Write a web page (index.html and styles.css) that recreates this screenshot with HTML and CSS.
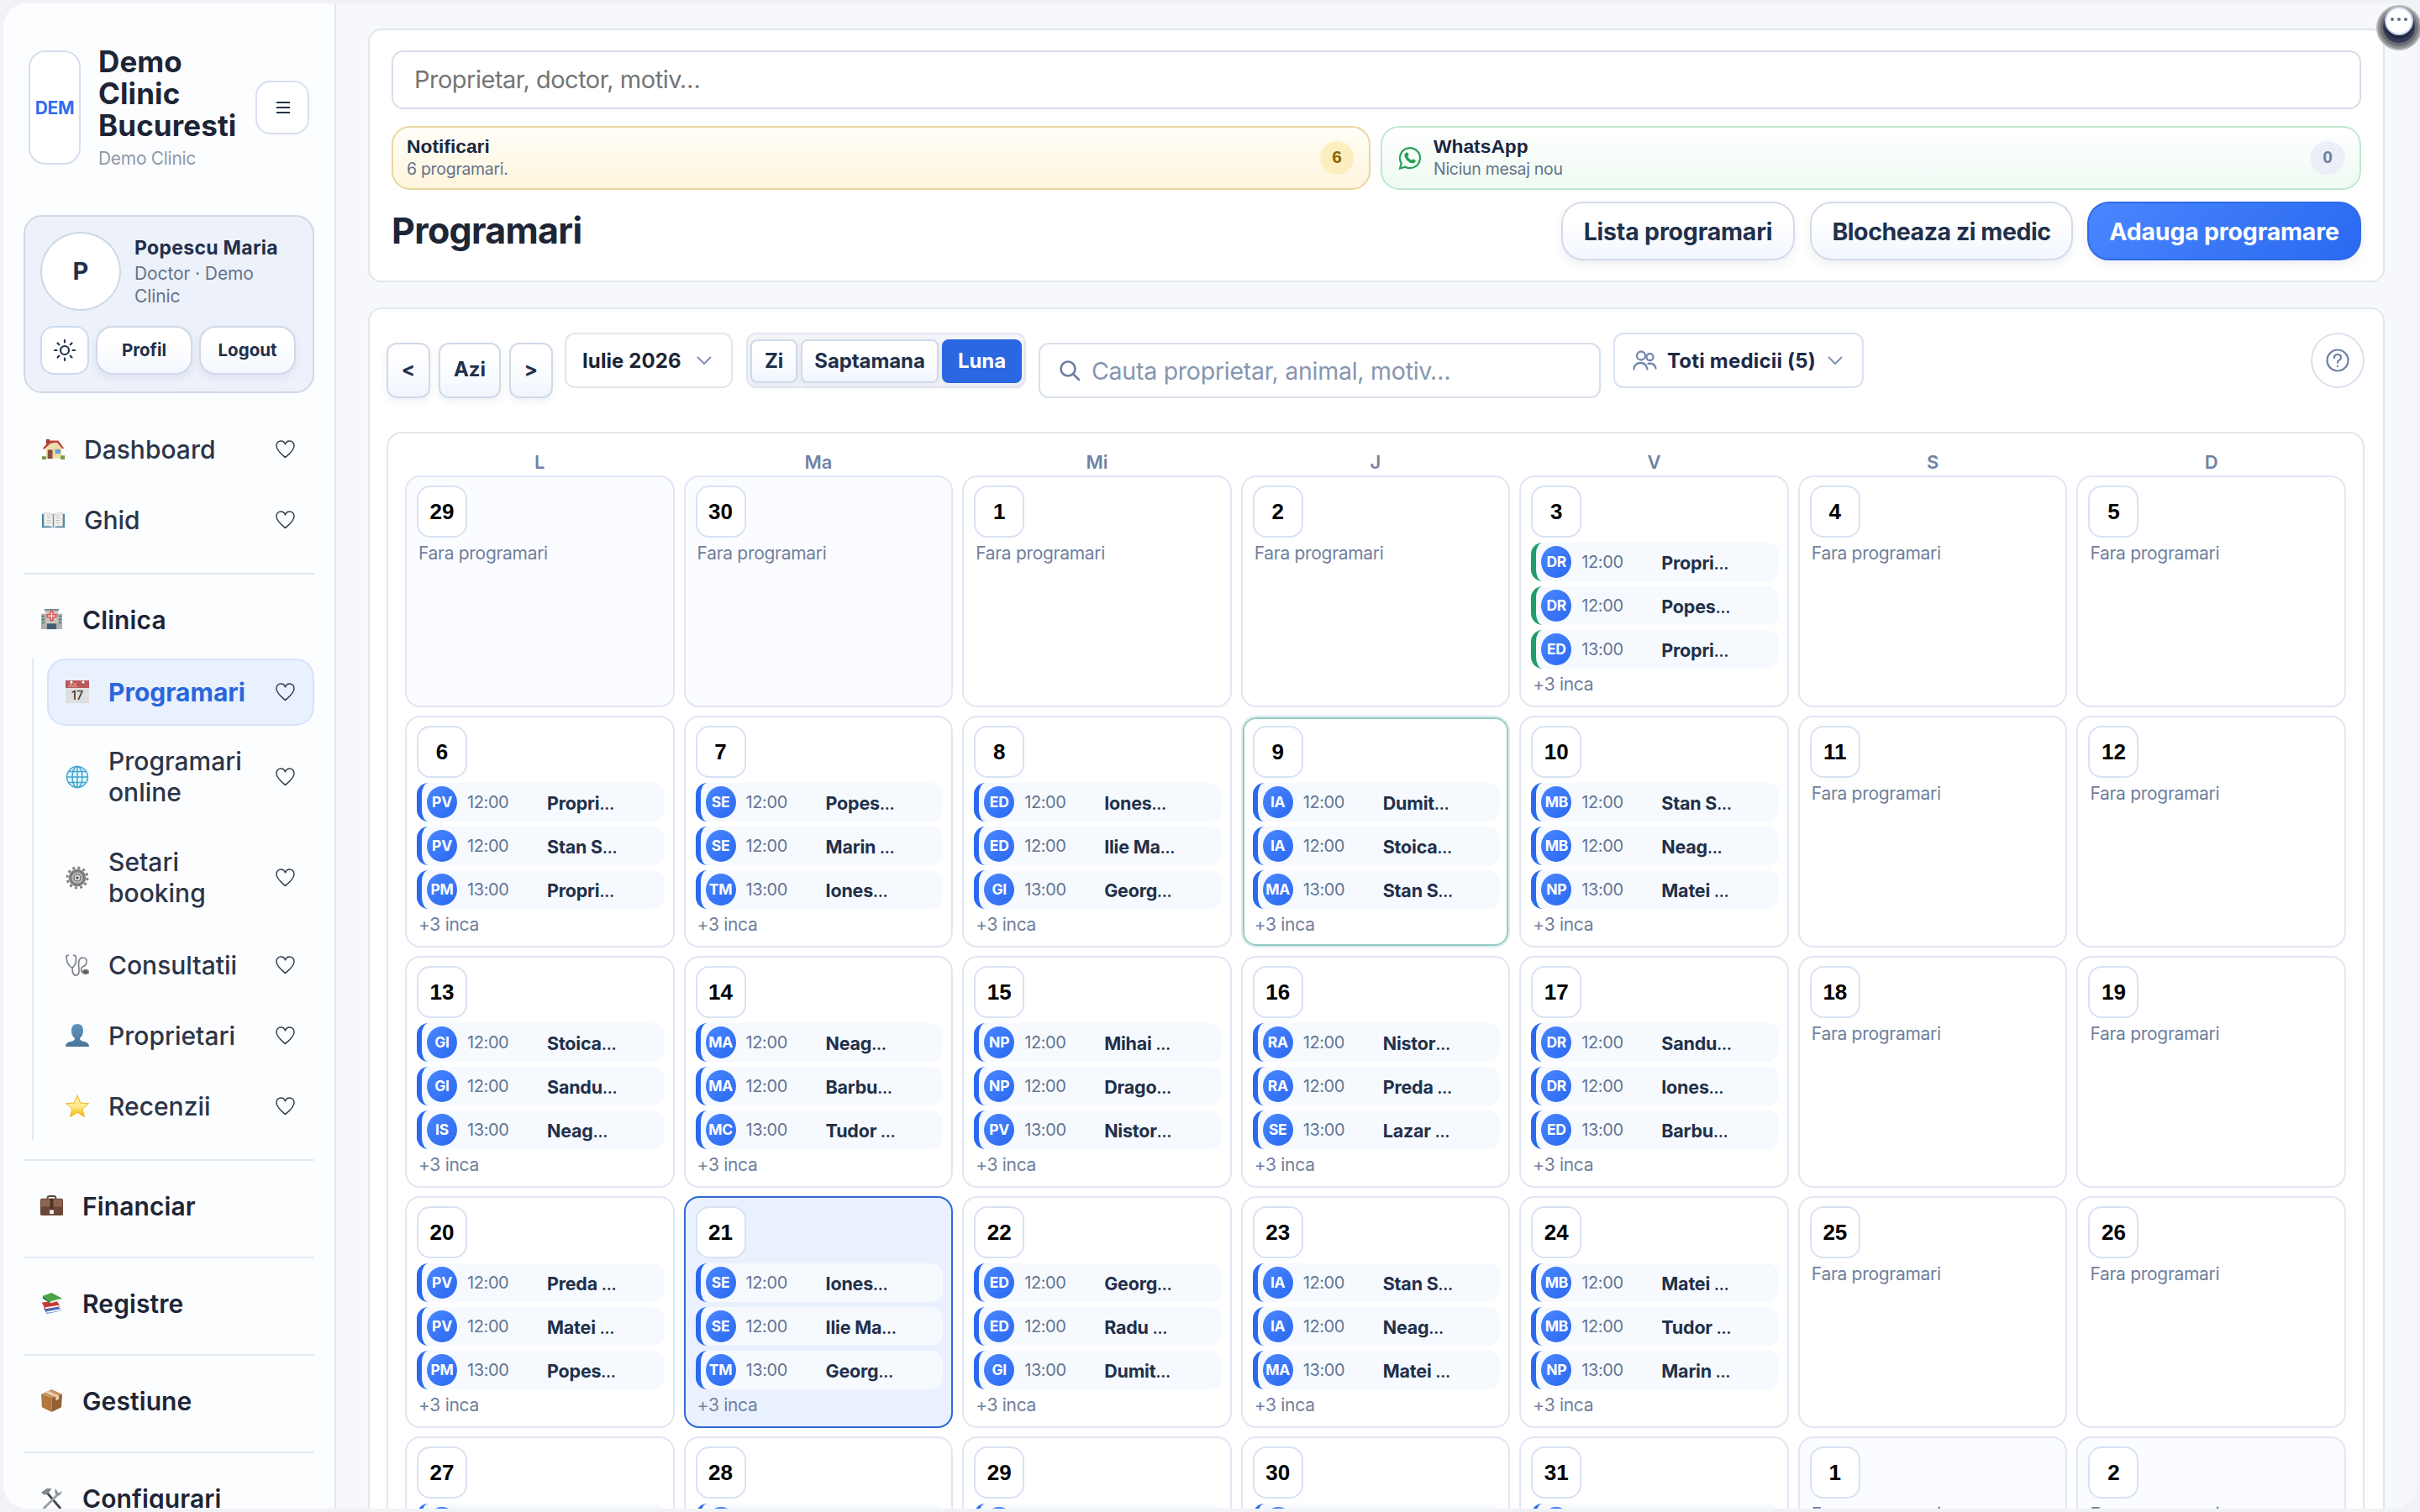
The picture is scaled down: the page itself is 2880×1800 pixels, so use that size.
FILE: index.html
```html
<!DOCTYPE html>
<html lang="ro">
	<head>
		<meta charset="utf-8" />
		<title>Programari</title>
		<link rel="stylesheet" href="styles.css">
	</head>
	<body>
		<!-- simboluri folosite de mai multe ori -->
		<svg class="defs">
			<symbol id="heart" viewBox="0 0 24 24"><path d="M12 22 C9 19 1 13.500 1 7.500 C1 4 3.500 1.500 6.500 1.500 C9.500 1.500 11.500 3.500 12 6 C12.500 3.500 14.500 1.500 17.500 1.500 C20.500 1.500 23 4 23 7.500 C23 13.500 15 19 12 22Z" fill="none" stroke="#2f3a4d" stroke-width="1.500"/></symbol>
			<symbol id="chevron" viewBox="0 0 18 10"><path d="M1 1 L9 9 L17 1" fill="none" stroke="#7d91b5" stroke-width="2"/></symbol>
		</svg>

		<div class="window">
			<aside class="sidebar">
				<div class="brand">
					<div class="brand-logo">DEM</div>
					<div class="brand-text">
						<div class="brand-name">Demo Clinic Bucuresti</div>
						<div class="brand-sub">Demo Clinic</div>
					</div>
					<div class="menu-btn"><span></span><span></span><span></span></div>
				</div>

				<div class="user">
					<div class="user-top">
						<div class="avatar">P</div>
						<div>
							<div class="user-name">Popescu Maria</div>
							<div class="user-role">Doctor · Demo Clinic</div>
						</div>
					</div>
					<div class="user-btns">
						<div class="theme-btn">
							<svg width="28" height="28" viewBox="0 0 28 28" fill="none" stroke="#25324a" stroke-width="2.200" stroke-linecap="round"><circle cx="14" cy="14" r="5"/><path d="M14 2v2.500M14 23.500v2.500M2 14h2.500M23.500 14h2.500M5.500 5.500l1.800 1.800M20.700 20.700l1.800 1.800M5.500 22.500l1.800-1.800M20.700 7.300l1.800-1.800"/></svg>
						</div>
						<div class="small-btn">Profil</div>
						<div class="small-btn">Logout</div>
					</div>
				</div>

				<nav class="nav">
					<a class="link">
						<svg class="ico" viewBox="0 0 28 28"><path d="M5 10 L11 5 H20 L24 11 V25 H5z" fill="#f0dcb0"/><path d="M5 1h4.500v6H5z" fill="#a63a2c"/><path d="M1 12 L10 2.500 H20 L27 12 L25.500 13 L18.500 5 H17 L10.500 6 L2.500 13.500Z" fill="#b8402f"/><path d="M7 14h6v11H7z" fill="#85513a"/><path d="M16 13h7v6h-7z" fill="#5aa4e0" stroke="#e8c890"/><path d="M0 22h5v4H0zM23 21h5v5h-5z" fill="#6f9b45"/></svg>
						<span class="label">Dashboard</span><svg class="heart"><use href="#heart"/></svg>
					</a>
					<a class="link">
						<svg class="ico" viewBox="0 0 28 28"><path d="M0 6h28v17H0z" fill="#4a86a8"/><path d="M2.500 5 Q9 4 14 7 Q19 4 25.500 5 V21 Q19 20 14 22.500 Q9 20 2.500 21Z" fill="#f1f1ef" stroke="#c9c9c9"/><path d="M14 7v15" stroke="#8b8b8b" stroke-width="1.500"/><path d="M6 8h5M6 11h5M6 14h5M6 17h5M17 8h5M17 11h5M17 14h5M17 17h5" stroke="#bdbdbd"/></svg>
						<span class="label">Ghid</span><svg class="heart"><use href="#heart"/></svg>
					</a>
				</nav>

				<div class="section open">
					<div class="section-head">
						<svg class="ico" viewBox="0 0 28 28"><path d="M6 2h16v24H6z" fill="#c9c5bd"/><path d="M1 7h6v19H1zM21 7h6v19h-6z" fill="#b3b0a8"/><path d="M5 1h18v2H5z" fill="#7f8790"/><path d="M2 9h3v2H2zM2 13h3v2H2zM2 17h3v2H2zM23 9h3v2h-3zM23 13h3v2h-3zM23 17h3v2h-3z" fill="#4b7a80"/><path d="M8 19h12v7H8z" fill="#3f5f78"/><path d="M12.500 4h3v4H19.500v3h-4V15h-3v-4h-4v-3h4z" fill="#f7dcdc" stroke="#e04848" stroke-width="1.500"/></svg>
						<span>Clinica</span>
					</div>
					<div class="subnav">
						<a class="link active">
							<svg class="ico" viewBox="0 0 28 28"><path d="M0 1h28v26H0z" fill="#dedede"/><path d="M0 0h28v9H0z" fill="#b85a5c"/><circle cx="7" cy="2" r="1.500" fill="#fff"/><circle cx="21" cy="2" r="1.500" fill="#fff"/><text x="3" y="8" font-size="6" fill="#eebcbc" font-family="Inter, sans-serif">JUL</text><text x="14" y="23" text-anchor="middle" font-size="14" fill="#333" font-family="Inter, sans-serif">17</text></svg>
							<span class="label">Programari</span><svg class="heart"><use href="#heart"/></svg>
						</a>
						<a class="link two">
							<svg class="ico" viewBox="0 0 28 28" fill="none" stroke="#42a5cf" stroke-width="1.500"><circle cx="14" cy="14" r="12.500" fill="#e3f6fc"/><ellipse cx="14" cy="14" rx="6" ry="12.500"/><path d="M14 1.500v25M1.500 14h25M3.500 7.500h21M3.500 20.500h21"/></svg>
							<span class="label">Programari online</span><svg class="heart"><use href="#heart"/></svg>
						</a>
						<a class="link two">
							<svg class="ico" viewBox="0 0 28 28"><circle cx="14" cy="14" r="12" fill="none" stroke="#858585" stroke-width="3" stroke-dasharray="3.100 3.180"/><circle cx="14" cy="14" r="8.500" fill="#b5b5b5" stroke="#7d7d7d" stroke-width="3.500"/><circle cx="14" cy="14" r="4" fill="#e2e2e2" stroke="#666"/><circle cx="14" cy="14" r="1.600" fill="#444"/></svg>
							<span class="label">Setari booking</span><svg class="heart"><use href="#heart"/></svg>
						</a>
						<a class="link">
							<svg class="ico" viewBox="0 0 28 28" fill="none" stroke="#7b7e83" stroke-width="1.600"><path d="M4 2 L1 3 Q1 12 6 16 Q8 18 10 15 Q14 10 12 3 L9 2"/><path d="M8 17 Q8 27 13 26 Q17 25 16 18 Q14 6 20 5 Q26 5 25 11 Q24 15 20 16 Q17 19 20 23"/><ellipse cx="24" cy="22" rx="3.500" ry="2.500" fill="#555" stroke="#888"/></svg>
							<span class="label">Consultatii</span><svg class="heart"><use href="#heart"/></svg>
						</a>
						<a class="link">
							<svg class="ico" viewBox="0 0 28 28"><defs><linearGradient id="bust" x2="0" y2="1"><stop stop-color="#5f93bb"/><stop offset="1" stop-color="#4a7498"/></linearGradient></defs><path d="M0 27 Q0 22 6 21 Q11 20 11 17 Q7 14 7 8 Q7 0 14 0 Q21 0 21 8 Q21 14 17 17 Q17 20 22 21 Q28 22 28 27Z" fill="url(#bust)"/></svg>
							<span class="label">Proprietari</span><svg class="heart"><use href="#heart"/></svg>
						</a>
						<a class="link">
							<svg class="ico" viewBox="0 0 28 28"><defs><linearGradient id="gold" x2="0" y2="1"><stop stop-color="#ffe98a"/><stop offset=".5" stop-color="#ffeb90"/><stop offset="1" stop-color="#f7b500"/></linearGradient></defs><path d="M14 1 L17.800 10 L27.500 10.700 L20 17 L22.500 26.500 L14 21.300 L5.500 26.500 L8 17 L.5 10.700 L10.200 10Z" fill="url(#gold)" stroke="#eeb32b"/></svg>
							<span class="label">Recenzii</span><svg class="heart"><use href="#heart"/></svg>
						</a>
					</div>
				</div>

				<div class="section">
					<div class="section-head">
						<svg class="ico" viewBox="0 0 28 28"><path d="M9 6 V4 Q9 2 11 2 H17 Q19 2 19 4 V6" fill="none" stroke="#5c463b" stroke-width="2"/><rect y="5" width="28" height="21" rx="2" fill="#6b4738"/><path d="M1 6h26v9H1z" fill="#8e6450"/><path d="M12 5h4v15h-4z" fill="#4d3228"/><path d="M11.500 19h5v5h-5z" fill="#eee"/></svg>
						<span>Financiar</span>
					</div>
				</div>
				<div class="section">
					<div class="section-head">
						<svg class="ico" viewBox="0 0 28 28"><path d="M4 20 L22 17 L26 23 L8 27Z" fill="#3d6fc0"/><path d="M8 24 L25 21 V23 L8 26Z" fill="#fff"/><path d="M2 13 L20 11 L25 18 L6 22Z" fill="#c33b34"/><path d="M6 19 L25 16 V18 L6 21Z" fill="#f2f2f2"/><path d="M3 5 L14 1 L27 8 L12 12Z" fill="#4aa644"/><path d="M3 5 L12 12 V14 L3 8Z" fill="#2d7a2c"/><path d="M12 12 L27 8 V10 L12 14Z" fill="#e9f0e6"/></svg>
						<span>Registre</span>
					</div>
				</div>
				<div class="section">
					<div class="section-head">
						<svg class="ico" viewBox="0 0 28 28"><path d="M1 6 L14 0 L27 6 L14 12Z" fill="#c9945c"/><path d="M1 6 L14 11 V28 L2 22Z" fill="#b07840"/><path d="M27 6 L14 11 V28 L26 22Z" fill="#94602f"/><path d="M6 4 L19 9 V14 L23 12 V8 L10 2Z" fill="#ead3b4"/></svg>
						<span>Gestiune</span>
					</div>
				</div>
				<div class="section">
					<div class="section-head">
						<svg class="ico" viewBox="0 0 28 28" fill="none"><path d="M8 7 L25 27" stroke="#4a4a4a" stroke-width="3"/><path d="M22 9 L4 27" stroke="#9aa0a8" stroke-width="3"/><path d="M1 7 L8 2 L14 2 L10 8 L5 10Z" fill="#7d858e"/><path d="M19 2 Q16 8 21 11 Q26 11 27 5 L23 8 L21 6Z" fill="#8d949c"/></svg>
						<span>Configurari</span>
					</div>
				</div>
			</aside>

			<main class="main">
				<div class="panel top">
					<div class="search-top">Proprietar, doctor, motiv…</div>
					<div class="alerts">
						<div class="alert yellow">
							<div class="alert-text"><b>Notificari</b><span>6 programari.</span></div>
							<div class="badge">6</div>
						</div>
						<div class="alert green">
							<svg width="28" height="28" viewBox="0 0 28 28"><path d="M2 26.500 L3.700 20.300 A12 12 0 1 1 8.300 24.700 Z" fill="none" stroke="#27a05a" stroke-width="2.200"/><path d="M9.500 7.500 L11.200 7.600 L12.600 10.800 L11.400 12.600 Q12.800 15.400 16 16.800 L17.600 15.200 L20.700 16.700 Q20.800 19.800 17.600 20.300 Q14 20.600 10.400 16.900 Q7 13.300 7.500 10 Q8 8 9.500 7.500Z" fill="#27a05a"/></svg>
							<div class="alert-text"><b>WhatsApp</b><span>Niciun mesaj nou</span></div>
							<div class="badge">0</div>
						</div>
					</div>
					<div class="title-row">
						<h1>Programari</h1>
						<div class="btn b1">Lista programari</div>
						<div class="btn b2">Blocheaza zi medic</div>
						<div class="btn b3 primary">Adauga programare</div>
					</div>
				</div>

				<div class="panel calendar-panel">
					<div class="toolbar">
						<div class="pager">
							<div class="tool">&lt;</div>
							<div class="tool azi">Azi</div>
							<div class="tool">&gt;</div>
						</div>
						<div class="select month">Iulie 2026 <svg class="chev"><use href="#chevron"/></svg></div>
						<div class="views">
							<div class="zi">Zi</div>
							<div class="sapt">Saptamana</div>
							<div class="luna on">Luna</div>
						</div>
						<div class="search">
							<svg width="26" height="26" viewBox="0 0 26 26" fill="none" stroke="#6b7fa3" stroke-width="2.600" stroke-linecap="round"><circle cx="11" cy="11" r="8.500"/><path d="M17.500 17.500 L24 24"/></svg>
							<span>Cauta proprietar, animal, motiv…</span>
						</div>
						<div class="select medici">
							<svg width="29" height="24" viewBox="0 0 29 24" fill="none" stroke="#7488ad" stroke-width="2.300" stroke-linecap="round"><circle cx="10" cy="6.500" r="5"/><circle cx="20.500" cy="8" r="4"/><path d="M1.500 22.500 Q2 15 9.500 15 Q16 15 17.500 22.500 M18.500 16 Q26 14.500 27.500 21.500"/></svg>
							<span>Toti medicii (5)</span>
							<svg class="chev"><use href="#chevron"/></svg>
						</div>
						<div class="help">
							<svg width="28" height="28" viewBox="0 0 28 28" fill="none" stroke="#6b7fa3" stroke-width="2.200" stroke-linecap="round"><circle cx="14" cy="14" r="12.500"/><path d="M10 11 Q10 7 14 7 Q18 7 18 10.500 Q18 12.500 16 13.600 Q14 14.800 14 16.800"/><path d="M14 21v.2"/></svg>
						</div>
					</div>

					<div class="calendar">
						<div class="weekdays"><div>L</div><div>Ma</div><div>Mi</div><div>J</div><div>V</div><div>S</div><div>D</div></div>
						<div class="days" id="days"></div>
					</div>
				</div>
			</main>
		</div>
		<div class="bubble"><i></i><i></i><i></i></div>

		<script src="calendar.js"></script>
	</body>
</html>
```
FILE: calendar.js
```js
// zi, programari (medic ora client), clasa
var days = [
	["29", "", "out"], ["30", "", "out"], ["1", ""], ["2", ""],
	["3", "DR|12:00|Propri…,DR|12:00|Popes…,ED|13:00|Propri…", "done"], ["4", ""], ["5", ""],

	["6", "PV|12:00|Propri…,PV|12:00|Stan S…,PM|13:00|Propri…"],
	["7", "SE|12:00|Popes…,SE|12:00|Marin …,TM|13:00|Iones…"],
	["8", "ED|12:00|Iones…,ED|12:00|Ilie Ma…,GI|13:00|Georg…"],
	["9", "IA|12:00|Dumit…,IA|12:00|Stoica…,MA|13:00|Stan S…", "today"],
	["10", "MB|12:00|Stan S…,MB|12:00|Neag…,NP|13:00|Matei …"], ["11", ""], ["12", ""],

	["13", "GI|12:00|Stoica…,GI|12:00|Sandu…,IS|13:00|Neag…"],
	["14", "MA|12:00|Neag…,MA|12:00|Barbu…,MC|13:00|Tudor …"],
	["15", "NP|12:00|Mihai …,NP|12:00|Drago…,PV|13:00|Nistor…"],
	["16", "RA|12:00|Nistor…,RA|12:00|Preda …,SE|13:00|Lazar …"],
	["17", "DR|12:00|Sandu…,DR|12:00|Iones…,ED|13:00|Barbu…"], ["18", ""], ["19", ""],

	["20", "PV|12:00|Preda …,PV|12:00|Matei …,PM|13:00|Popes…"],
	["21", "SE|12:00|Iones…,SE|12:00|Ilie Ma…,TM|13:00|Georg…", "selected"],
	["22", "ED|12:00|Georg…,ED|12:00|Radu …,GI|13:00|Dumit…"],
	["23", "IA|12:00|Stan S…,IA|12:00|Neag…,MA|13:00|Matei …"],
	["24", "MB|12:00|Matei …,MB|12:00|Tudor …,NP|13:00|Marin …"], ["25", ""], ["26", ""],

	["27", "||"], ["28", "||"], ["29", "||"], ["30", "||"], ["31", "||"],
	["1", "", "out"], ["2", "", "out"]
];

var html = "";
for(var i = 0;i<days.length;i++){
	var d = days[i];
	html += '<div class="day ' + (d[2] || "") + '"><div class="num">' + d[0] + '</div>';
	if(d[1] == ""){
		html += '<div class="note">Fara programari</div>';
	}else{
		var list = d[1].split(",");
		for(var j = 0;j<list.length;j++){
			var e = list[j].split("|");
			html += '<div class="event"><span class="doc">' + e[0] + '</span><span class="hour">' + e[1] + '</span><b>' + e[2].replace("…", "<i>…</i>") + '</b></div>';
		}
		if(list.length > 1){
			html += '<div class="note">+3 inca</div>';
		}
	}
	html += '</div>';
}
document.getElementById("days").innerHTML = html;
```
FILE: styles.css
```css
*{
	box-sizing: border-box;
}

body{
	margin: 0;
	height: 1800px;
	padding: 4px;
	background-color: #f0f2f6;
	font-family: Inter, "Open Sans", sans-serif;
	color: #1d2536;
	overflow: hidden;
	position: relative;
}

.defs{
	display: none;
}

.window{
	display: flex;
	height: 1792px;
	background-color: #f6f8fb;
	border-radius: 28px;
	overflow: hidden;
}

/* sidebar */
.sidebar{
	width: 396px;
	flex: none;
	padding: 50px 24px 0;
	background-color: #fcfdff;
	border-right: 2px solid #e3e7ee;
}

.brand{
	display: flex;
	align-items: center;
	height: 148px;
	padding-left: 6px;
}

.brand-logo{
	width: 62px;
	height: 136px;
	line-height: 134px;
	text-align: center;
	background-color: white;
	border: 2px solid #d8dcef;
	border-radius: 20px;
	color: #2f6df0;
	font-size: 21px;
	font-weight: bold;
	letter-spacing: -0.3px;
}

.brand-text{
	width: 187px;
	padding-left: 21px;
}

.brand-name{
	font-size: 35px;
	line-height: 38px;
	font-weight: bold;
	letter-spacing: 0.1px;
}

.brand-sub{
	margin-top: 7px;
	font-size: 21px;
	line-height: 28px;
	color: #8f99ab;
	letter-spacing: -0.3px;
}

.menu-btn{
	display: flex;
	flex-direction: column;
	align-items: center;
	justify-content: center;
	gap: 4px;
	width: 64px;
	height: 64px;
	margin-left: 21px;
	background-color: white;
	border: 2px solid #d8dfef;
	border-radius: 18px;
}

.menu-btn span{
	width: 16px;
	height: 2px;
	margin-left: 2px;
	background-color: #25324a;
}

.user{
	height: 212px;
	margin-top: 54px;
	padding: 18px;
	background-color: #edf1fa;
	border: 2px solid #d0d8e8;
	border-radius: 22px;
}

.user-top{
	display: flex;
	align-items: center;
	gap: 16px;
}

.avatar{
	flex: none;
	width: 96px;
	height: 94px;
	line-height: 90px;
	text-align: center;
	background-color: white;
	border: 2px solid #cfd8e8;
	border-radius: 50%;
	font-size: 29px;
	font-weight: bold;
	color: #22304a;
}

.user-name{
	font-size: 23px;
	line-height: 30px;
	font-weight: bold;
	color: #22304a;
	white-space: nowrap;
	letter-spacing: 0.3px;
}

.user-role{
	margin-top: 2px;
	font-size: 21px;
	line-height: 27px;
	color: #64748b;
	letter-spacing: -0.1px;
}

.user-btns{
	display: flex;
	gap: 8px;
	margin-top: 18px;
}

.theme-btn{
	display: flex;
	align-items: center;
	justify-content: center;
	width: 58px;
	height: 58px;
	background-color: white;
	border: 2px solid #cddaf0;
	border-radius: 16px;
}

.small-btn{
	width: 115px;
	height: 58px;
	line-height: 54px;
	text-align: center;
	font-size: 20.500px;
	font-weight: bold;
	color: #22304a;
	background: linear-gradient(#fff 40%, #f3f7fe);
	border: 2px solid #cfd9e8;
	border-radius: 20px;
	box-shadow: 0 4px 10px rgba(40, 60, 110, .08);
}

.nav{
	margin-top: 27px;
	display: flex;
	flex-direction: column;
	gap: 4px;
}

.link{
	display: flex;
	align-items: center;
	height: 80px;
	padding: 0 21px 0 20px;
	border: 2px solid transparent;
	border-radius: 22px;
	font-size: 30px;
	line-height: 37px;
	font-weight: 500;
	color: #2c3548;
}

.ico{
	flex: none;
	width: 27px;
	height: 27px;
}

.link .label{
	flex: 1;
	padding-left: 23px;
}

.heart{
	flex: none;
	width: 23px;
	height: 24px;
}

.section{
	margin-top: 20px;
	padding-top: 14px;
	border-top: 2px solid #e2e8f1;
}

.nav + .section{
	margin-top: 23px;
}

.open + .section{
	margin-top: 23px;
}

.section-head{
	display: flex;
	align-items: center;
	gap: 23px;
	height: 80px;
	padding: 0 0 1px 20px;
	font-size: 30px;
	font-weight: 600;
	color: #1d2536;
	letter-spacing: 0.1px;
}

.subnav{
	display: flex;
	flex-direction: column;
	gap: 4px;
	margin: 6px 0 0 10px;
	padding-left: 16px;
	border-left: 2px solid #e2e8f3;
}

.subnav .ico{
	width: 28px;
	height: 28px;
}

.subnav .link .label{
	padding-left: 23px;
}

.link.two{
	height: 116.500px;
	padding-bottom: 3px;
}

.link.active{
	background-color: #eaf1fe;
	border-color: #d6e2fb;
}

.link.active .label{
	color: #2a66dd;
	font-weight: bold;
}

/* continut */
.main{
	flex: 1;
	display: flex;
	flex-direction: column;
	gap: 30px;
	padding: 30px 38px 0;
}

.panel{
	background-color: white;
	border: 2px solid #e1e6ed;
	border-radius: 16px;
}

.top{
	height: 302px;
	padding: 24px 26px;
	flex: none;
}

.search-top{
	height: 70px;
	line-height: 65px;
	padding-left: 25px;
	border: 2px solid #d8deec;
	border-radius: 14px;
	font-size: 29px;
	color: #757575;
	letter-spacing: -0.5px;
}

.alerts{
	display: flex;
	gap: 12px;
	margin-top: 20px;
}

.alert{
	flex: 1;
	display: flex;
	align-items: center;
	height: 76px;
	padding: 0 18px 0 16px;
	border-radius: 22px;
}

.alert.yellow{
	background: linear-gradient(#fffef8, #fef5dc);
	border: 2px solid #ead7a0;
}

.alert.green{
	gap: 14px;
	padding-left: 19px;
	padding-right: 17px;
	background: linear-gradient(#fff, #eefaf2);
	border: 2px solid #bfe8cf;
}

.alert-text{
	flex: 1;
	display: flex;
	flex-direction: column;
}

.alert-text b{
	font: bold 22.800px/27px "Liberation Sans", Arial, sans-serif;
	color: #1b2740;
}

.alert-text span{
	font-size: 19.500px;
	line-height: 27px;
	color: #64748b;
	letter-spacing: -0.3px;
}

.badge{
	width: 40px;
	height: 40px;
	text-align: center;
	border-radius: 50%;
	font: bold 21px/38px "Liberation Sans", Arial, sans-serif;
}

.yellow .badge{
	background-color: #fdeebf;
	color: #8a6500;
}

.green .badge{
	width: 42px;
	background-color: #eceff7;
	color: #71809d;
}

.title-row{
	display: flex;
	align-items: center;
	margin-top: 14px;
}

.title-row h1{
	flex: 1;
	margin: 0;
	padding-bottom: 1px;
	font-size: 43px;
	line-height: 69px;
	letter-spacing: -0.7px;
}

.btn{
	height: 70px;
	line-height: 68px;
	margin-left: 18px;
	text-align: center;
	font-size: 28.500px;
	font-weight: bold;
	letter-spacing: -0.2px;
	white-space: nowrap;
	color: #22304a;
	background: linear-gradient(#fff 30%, #f2f6fe);
	border: 2px solid #d3dbea;
	border-radius: 26px;
	box-shadow: 0 6px 12px rgba(40, 60, 110, .07);
}

.b1{
	width: 278px;
}

.b2{
	width: 313px;
	letter-spacing: -0.450px;
}

.b3{
	width: 326px;
	margin-left: 17px;
}

.btn.primary{
	color: white;
	background: linear-gradient(135deg, #4a86ff, #2a69f0);
	border-color: #2f6be6;
}

.calendar-panel{
	flex: none;
	height: 1500px;
	padding: 28px 22px 0 20px;
}

.toolbar{
	display: flex;
	align-items: flex-start;
	height: 78px;
}

.pager{
	display: flex;
	gap: 10px;
	margin: 12px 14px 0 0;
}

.tool, .views div{
	text-align: center;
	font-size: 24px;
	font-weight: bold;
	color: #22304a;
	background: linear-gradient(#fff 30%, #f0f5fe);
	border: 2px solid #d0dae9;
	box-shadow: 0 4px 10px rgba(40, 60, 110, .07);
}

.tool{
	width: 52px;
	height: 66px;
	line-height: 60px;
	border-radius: 12px;
}

.azi{
	width: 74px;
}

.select{
	display: flex;
	align-items: center;
	height: 66px;
	border-radius: 12px;
	font-size: 24px;
	font-weight: bold;
	white-space: nowrap;
	background-color: white;
	letter-spacing: 0.1px;
}

.month{
	width: 200px;
	padding: 0 23px 0 19px;
	justify-content: space-between;
	border: 2px solid #e1e6ee;
}

.chev{
	width: 18px;
	height: 10px;
}

.views{
	display: flex;
	gap: 4px;
	width: 333px;
	height: 66px;
	margin-left: 16px;
	padding: 6px 3px;
	background-color: #f3f5f9;
	border: 2px solid #e3e7ee;
	border-radius: 12px;
}

.views div{
	height: 52px;
	line-height: 48px;
	border-radius: 8px;
	letter-spacing: -0.1px;
}

.views .zi{
	width: 56px;
}

.views .sapt{
	width: 164px;
}

.views .luna{
	width: 95px;
	color: white;
	background: #2a67e0;
	border-color: #2a67e0;
}

.search{
	display: flex;
	align-items: center;
	gap: 13px;
	width: 669px;
	height: 66px;
	margin: 12px 0 0 15px;
	padding-left: 22px;
	border: 2px solid #d8dfec;
	border-radius: 12px;
	font-size: 28.500px;
	color: #8696b0;
	letter-spacing: -0.250px;
}

.medici{
	width: 298px;
	margin-left: 15px;
	padding: 0 23px 0 21px;
	border: 2px solid #d9e2f3;
	color: #1d2a48;
	letter-spacing: 0.2px;
}

.medici span{
	flex: 1;
	padding-left: 12px;
}

.help{
	display: flex;
	align-items: center;
	justify-content: center;
	width: 64px;
	height: 66px;
	margin-left: auto;
	border: 2px solid #d9e1f0;
	border-radius: 50%;
}

.calendar{
	width: 2354px;
	height: 1400px;
	margin-top: 40px;
	padding: 16px 20px;
	border: 2px solid #e3e7ee;
	border-radius: 18px;
}

.weekdays{
	display: grid;
	grid-template-columns: repeat(7, 1fr);
	gap: 11px;
	height: 34px;
	line-height: 36px;
	text-align: center;
	font-size: 22px;
	font-weight: 600;
	color: #7082a6;
}

.days{
	display: grid;
	grid-template-columns: repeat(7, 1fr);
	grid-auto-rows: 276px;
	gap: 10px 11px;
}

.day{
	padding: 10px 10px 10px 12px;
	background-color: white;
	border: 2px solid #e1e7f5;
	border-radius: 18px;
}

.day.out{
	background-color: #fbfcff;
}

.day.today{
	box-shadow: inset 0 0 0 2px #8fd0bb;
}

.day.selected{
	background-color: #eaf1fe;
	border-color: #2f68d8;
}

.num{
	width: 60px;
	height: 62px;
	margin-bottom: 6px;
	text-align: center;
	background-color: white;
	border: 2px solid #d8e2f4;
	border-radius: 16px;
	font: bold 26px/59px "Liberation Sans", Arial, sans-serif;
	color: black;
}

.note{
	padding-left: 2px;
	font-size: 21px;
	line-height: 26px;
	color: #71809d;
	letter-spacing: -0.3px;
}

.event{
	display: flex;
	align-items: center;
	height: 46px;
	margin-bottom: 6px;
	padding-left: 6px;
	background-color: #f6faff;
	border-left: 6px solid #2a69f0;
	border-radius: 14px;
}

.done .event{
	border-left-color: #1f9d6b;
}

.doc{
	width: 36px;
	height: 38px;
	line-height: 37px;
	text-align: center;
	border-radius: 50%;
	background: linear-gradient(135deg, #4a86ff, #2a69f0);
	color: white;
	font-size: 17.500px;
	font-weight: bold;
	letter-spacing: -0.3px;
}

.hour{
	width: 107px;
	padding-left: 12px;
	font-size: 20px;
	color: #64748f;
	letter-spacing: -0.4px;
}

.event b{
	padding-top: 2px;
	font-size: 21.500px;
	color: #22304a;
	letter-spacing: -0.2px;
	white-space: nowrap;
}

.event i{
	font-size: 17.500px;
	font-style: normal;
}

/* butonul plutitor din colt */
.bubble{
	position: absolute;
	top: 8px;
	left: 2838px;
	display: flex;
	align-items: center;
	justify-content: center;
	gap: 4px;
	width: 34px;
	height: 34px;
	padding-bottom: 4px;
	background-color: white;
	border: 2px solid #c9d0ea;
	border-radius: 50%;
	box-shadow: 0 4px 0 0 #1c2845, 0 7px 0 2px #333b52, 0 8px 0 5px #6b6d73, 0 8px 0 8px #8e8f92, 0 8px 0 10px #b6b7b8;
}

.bubble i{
	width: 4px;
	height: 4px;
	border-radius: 50%;
	background-color: #5b6b86;
}
```
